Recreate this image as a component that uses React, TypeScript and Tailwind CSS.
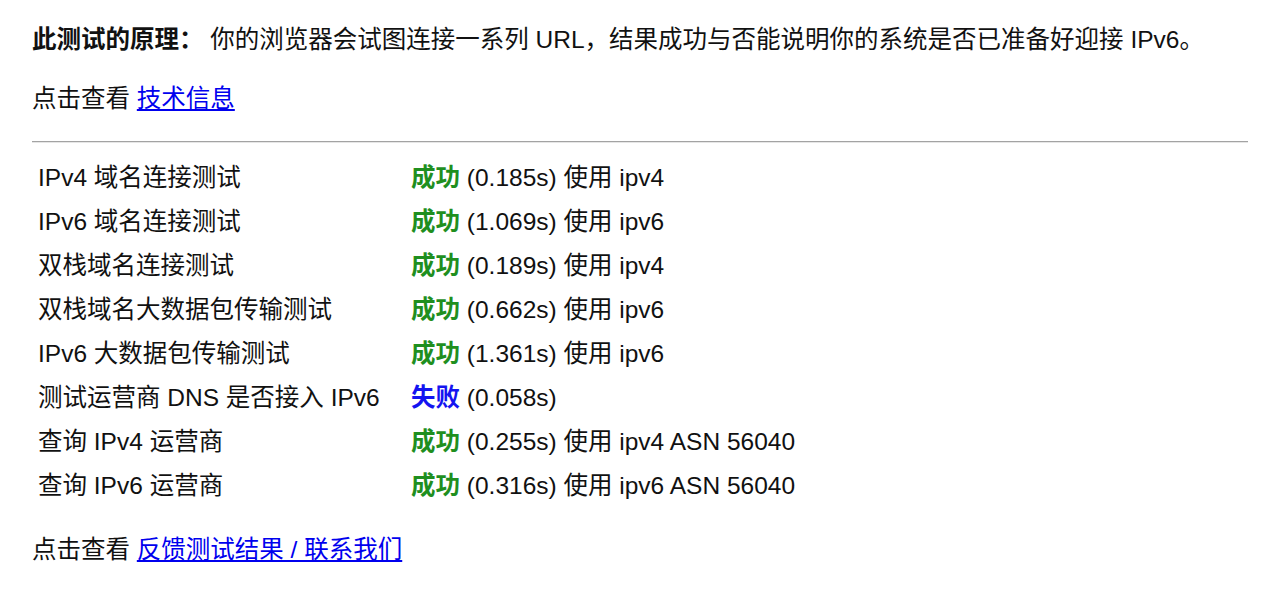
import React from 'react';

type Row = {
  name: string;
  ok: boolean;
  detail: string;
};

const rows: Row[] = [
  { name: 'IPv4 域名连接测试', ok: true, detail: '(0.185s) 使用 ipv4' },
  { name: 'IPv6 域名连接测试', ok: true, detail: '(1.069s) 使用 ipv6' },
  { name: '双栈域名连接测试', ok: true, detail: '(0.189s) 使用 ipv4' },
  { name: '双栈域名大数据包传输测试', ok: true, detail: '(0.662s) 使用 ipv6' },
  { name: 'IPv6 大数据包传输测试', ok: true, detail: '(1.361s) 使用 ipv6' },
  { name: '测试运营商 DNS 是否接入 IPv6', ok: false, detail: '(0.058s)' },
  { name: '查询 IPv4 运营商', ok: true, detail: '(0.255s) 使用 ipv4 ASN 56040' },
  { name: '查询 IPv6 运营商', ok: true, detail: '(0.316s) 使用 ipv6 ASN 56040' },
];

export default function App() {
  return (
    <div
      className="min-h-screen bg-white px-8 pt-[24px] text-[24.5px] text-[#111]"
      style={{ fontFamily: '"Liberation Sans", "Noto Sans CJK SC", sans-serif' }}
    >
      {/* Intro */}
      <p className="leading-[32px]">
        <span className="font-bold">此测试的原理：</span> 你的浏览器会试图连接一系列 URL，结果成功与否能说明你的系统是否已准备好迎接 IPv6。
      </p>

      <p className="mt-[27px] leading-[32px]">
        点击查看 <a href="#" className="text-[#0000ee] underline">技术信息</a>
      </p>

      <hr className="mt-[26px] border-t border-b border-t-[#a3a3a3] border-b-[#e6e6e6]" />

      {/* Results table */}
      <div className="mt-[13px] pl-[6px]">
        {rows.map((row) => (
          <div key={row.name} className="flex h-[44px] items-center">
            <div className="w-[373px] shrink-0">{row.name}</div>
            <div>
              {row.ok ? (
                <span className="font-bold text-[#1f8f1f]">成功</span>
              ) : (
                <span className="font-bold text-[#1414f0]">失败</span>
              )}{' '}
              {row.detail}
            </div>
          </div>
        ))}
      </div>

      <p className="mt-[26px] leading-[32px]">
        点击查看 <a href="#" className="text-[#0000ee] underline">反馈测试结果 / 联系我们</a>
      </p>
    </div>
  );
}
